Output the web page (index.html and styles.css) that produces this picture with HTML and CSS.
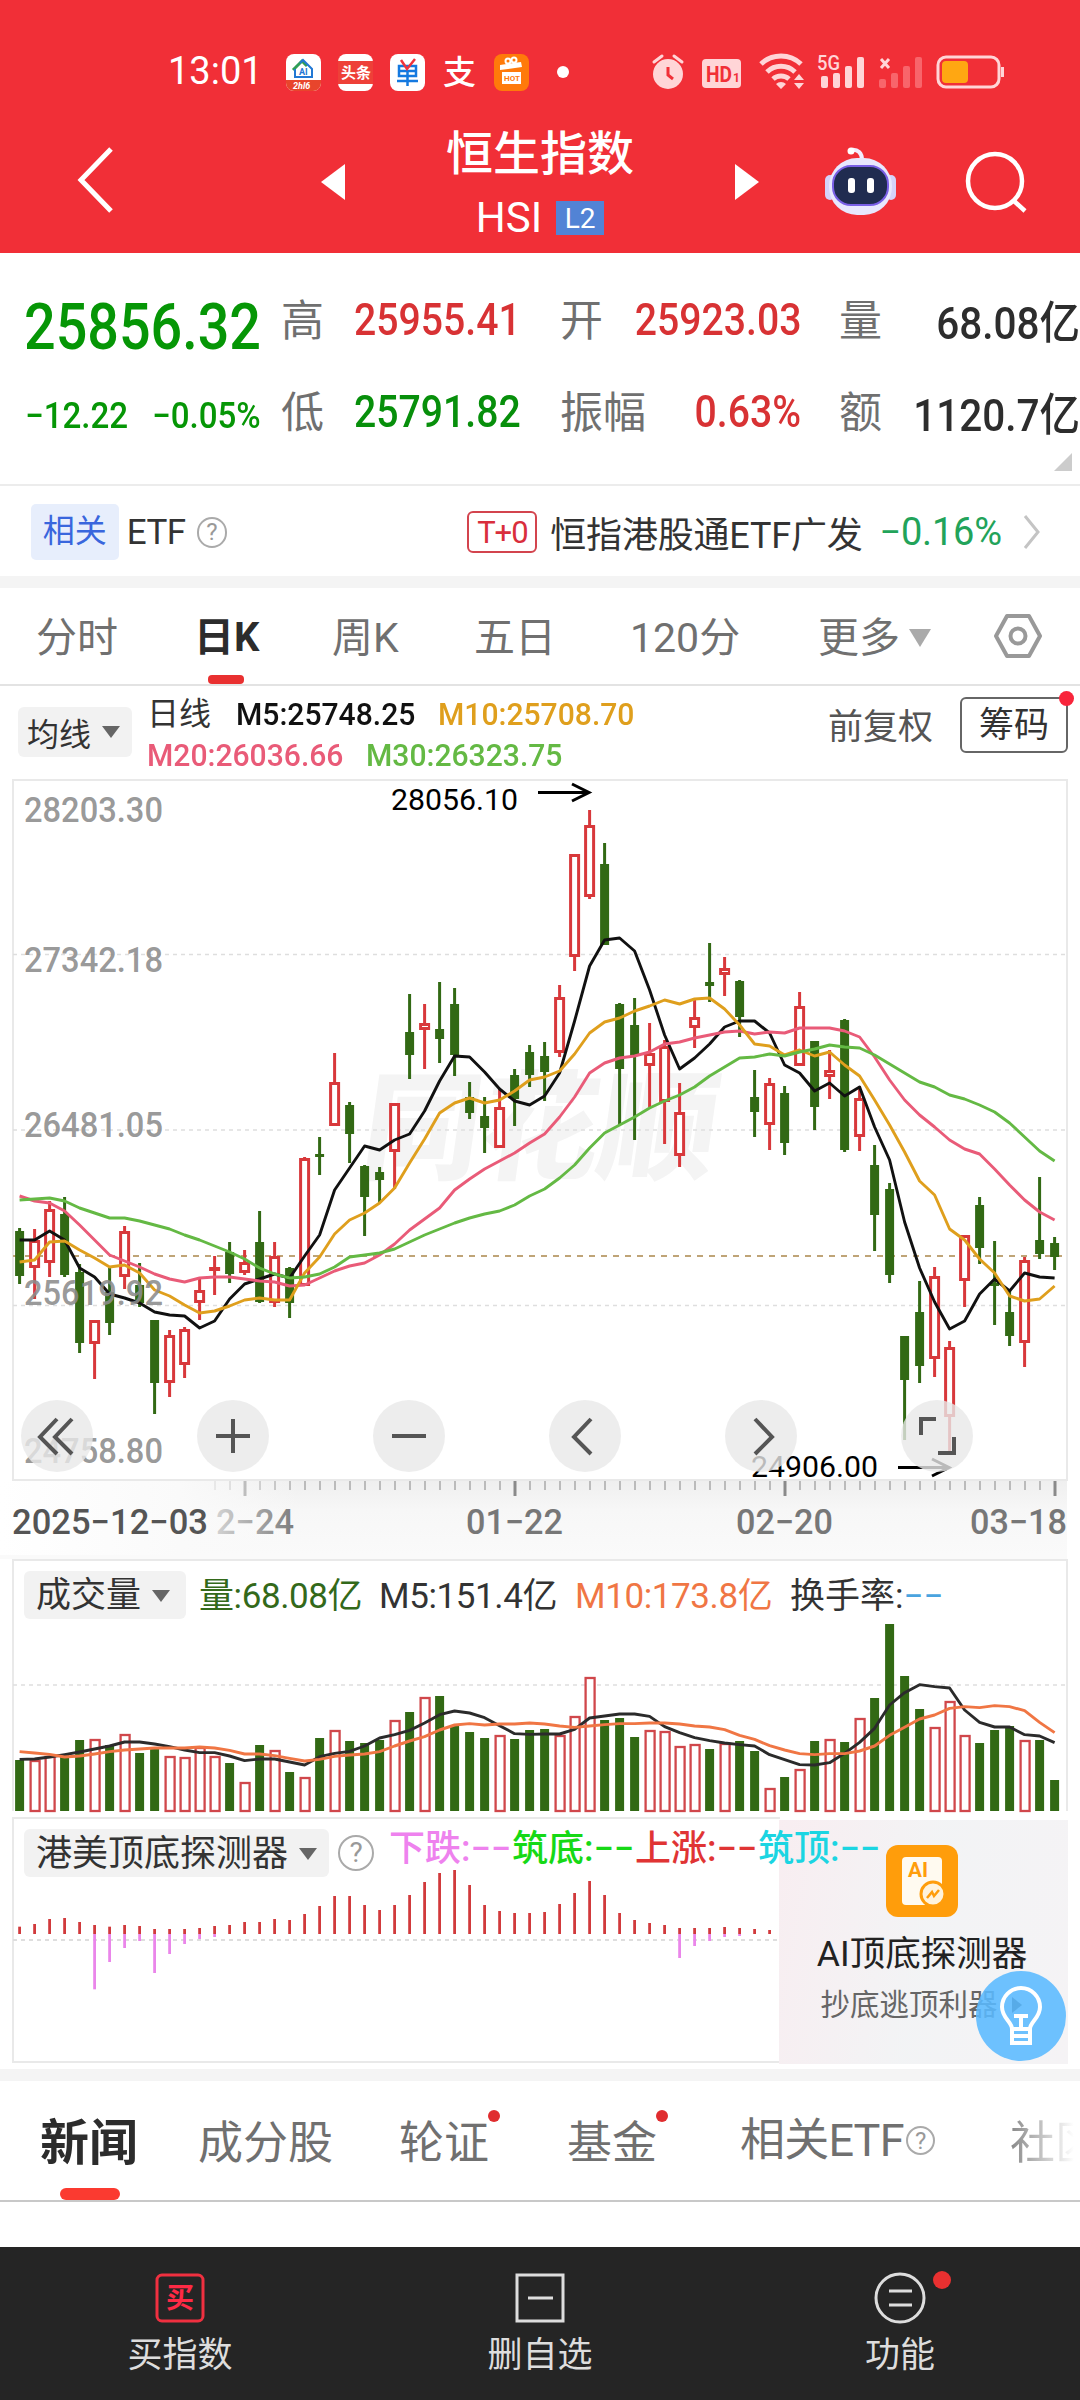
FILE: index.html
```html
<!DOCTYPE html>
<html lang="zh-CN">
<head>
  <meta charset="UTF-8">
  <meta name="viewport" content="width=device-width, initial-scale=1.0">
  <title>恒生指数 HSI</title>
  <link rel="stylesheet" href="styles.css">
</head>
<body>
  <header class="top">
    <div class="status">
      <span class="clock">13:01</span>
      <svg class="status-apps" viewBox="280 48 300 50" width="300" height="50">
        <rect x="286" y="54" width="35" height="37" rx="8" fill="#fff"/>
        <path d="M286 80h35v3a8 8 0 0 1-8 8h-19a8 8 0 0 1-8-8z" fill="#e8452c"/>
        <path d="M293 70l9-9 5 5" fill="none" stroke="#2f9e57" stroke-width="3"/>
        <path d="M300 63l3-3 9 9v8h-17v-8" fill="none" stroke="#2278d4" stroke-width="2"/>
        <text x="299" y="75" font-size="9" font-weight="700" fill="#2278d4">AI</text>
        <text x="293" y="89" font-size="9" font-style="italic" font-weight="700" fill="#fff">2hl6</text>
        <rect x="338" y="54" width="35" height="37" rx="8" fill="#fff"/>
        <rect x="338" y="61" width="35" height="23" fill="#ee4038"/>
        <text x="341" y="78" font-size="15" font-weight="700" fill="#fff">头条</text>
        <rect x="390" y="54" width="35" height="37" rx="8" fill="#fff"/>
        <path d="M399 66h17v10h-17zM399 71h17M407.500 71v15M397 81h21" fill="none" stroke="#1479e0" stroke-width="2.500"/>
        <path d="M401 60l6 9 8-10" fill="none" stroke="#f0333c" stroke-width="2.500"/>
        <text x="443" y="84" font-size="33" font-weight="500" fill="#fff">支</text>
        <rect x="494" y="54" width="35" height="37" rx="8" fill="#ff7a0a"/>
        <path d="M500 65l21-3 1 5-22 3zM502 72h19v12h-19z" fill="#fff"/>
        <circle cx="508" cy="61" r="2.500" fill="none" stroke="#fff" stroke-width="2"/>
        <circle cx="514" cy="60" r="2.500" fill="none" stroke="#fff" stroke-width="2"/>
        <text x="504" y="81" font-size="8" font-weight="700" fill="#ff7a0a">HOT</text>
        <circle cx="563" cy="72" r="6" fill="#fff"/>
      </svg>
      <svg class="status-sys" viewBox="650 48 360 50" width="360" height="50">
        <g fill="#ffd5d7">
          <circle cx="668" cy="74" r="15"/>
          <path d="M654 62l8-6M682 62l-8-6" stroke="#ffd5d7" stroke-width="3" stroke-linecap="round"/>
          <path d="M668 67v8l5 4" fill="none" stroke="#f12f37" stroke-width="3"/>
          <rect x="702" y="59" width="39" height="29" rx="4"/>
          <text x="706" y="82" font-size="22" font-weight="700" fill="#f12f37" textLength="26" lengthAdjust="spacingAndGlyphs">HD</text>
          <text x="733" y="82" font-size="12" font-weight="700" fill="#f12f37">1</text>
        </g>
        <path d="M761 64a29 29 0 0 1 40 0M767 72a20 20 0 0 1 28 0M773 79a12 12 0 0 1 16 0" fill="none" stroke="#ffd5d7" stroke-width="5"/>
        <path d="M776 84l5 5 5-5a7 7 0 0 0-10 0zM794 80l5-6 5 6zM794 83l5 6 5-6z" fill="#ffd5d7"/>
        <g fill="#ffd5d7">
          <text x="817" y="70" font-size="21" font-weight="500" textLength="23" lengthAdjust="spacingAndGlyphs">5G</text>
          <rect x="821" y="76" width="7" height="12" rx="2"/>
          <rect x="833" y="73" width="7" height="15" rx="2"/>
          <rect x="845" y="66" width="7" height="22" rx="2"/>
          <rect x="857" y="57" width="7" height="31" rx="2"/>
        </g>
        <path d="M881 59l8 9M889 59l-8 9" stroke="#ffd5d7" stroke-width="3"/>
        <g fill="#f8656b">
          <rect x="879" y="79" width="7" height="9" rx="2"/>
          <rect x="891" y="73" width="7" height="15" rx="2"/>
          <rect x="903" y="66" width="7" height="22" rx="2"/>
          <rect x="915" y="57" width="7" height="31" rx="2"/>
        </g>
        <rect x="938" y="57" width="61" height="30" rx="8" fill="none" stroke="#ffd5d7" stroke-width="3"/>
        <rect x="942" y="61" width="26" height="22" rx="4" fill="#ffa712"/>
        <rect x="1001" y="67" width="3" height="10" fill="#ffd5d7"/>
      </svg>
    </div>
    <div class="titlebar">
      <svg class="back" viewBox="0 0 40 70" width="40" height="70"><path d="M35 3L5 34l30 31" fill="none" stroke="#fff" stroke-width="5"/></svg>
      <svg class="arrow" viewBox="0 0 24 36" width="24" height="36"><path d="M24 0v36L0 18z" fill="#fff"/></svg>
      <div class="title">
        <div class="name">恒生指数</div>
        <div class="code">HSI<span class="level">L2</span></div>
      </div>
      <svg class="arrow" viewBox="0 0 24 36" width="24" height="36"><path d="M0 0v36l24-18z" fill="#fff"/></svg>
      <svg class="robot" viewBox="0 0 74 72" width="74" height="72">
        <path d="M27 4c7-1 11 3 11 10" fill="none" stroke="#f3edff" stroke-width="4" stroke-linecap="round"/>
        <circle cx="27" cy="5" r="3.500" fill="#fff"/>
        <rect x="1" y="29" width="10" height="25" rx="5" fill="#d5d2fa"/>
        <rect x="62" y="29" width="10" height="25" rx="5" fill="#d5d2fa"/>
        <rect x="5" y="12" width="63" height="57" rx="28" fill="#e8e7fd"/>
        <rect x="9" y="20" width="55" height="39" rx="18" fill="#202c50" stroke="#795fe5" stroke-width="2"/>
        <rect x="24" y="32" width="7" height="15" rx="3" fill="#fff"/>
        <rect x="43" y="32" width="7" height="15" rx="3" fill="#fff"/>
      </svg>
      <svg class="search" viewBox="0 0 62 62" width="62" height="62"><circle cx="30" cy="30" r="27" fill="none" stroke="#fff" stroke-width="4.500"/><path d="M48 49l12 11" stroke="#fff" stroke-width="4.500"/></svg>
    </div>
  </header>

  <section class="quote">
    <div class="price"><span class="num">25856.32</span></div>
    <span class="label">高</span><b class="num left red">25955.41</b>
    <span class="label">开</span><b class="num red">25923.03</b>
    <span class="label">量</span><b class="num dark">68.08亿</b>
    <div class="change"><span class="num">−12.22</span><span class="num">−0.05%</span></div>
    <span class="label">低</span><b class="num left green">25791.82</b>
    <span class="label">振幅</span><b class="num red">0.63%</b>
    <span class="label">额</span><b class="num dark">1120.7亿</b>
    <i class="corner"></i>
  </section>

  <section class="etf">
    <span class="tag">相关</span>
    <span class="etf-name">ETF</span>
    <span class="help">?</span>
    <span class="t0">T+0</span>
    <span class="fund">恒指港股通ETF广发</span>
    <span class="pct">−0.16%</span>
    <svg viewBox="0 0 20 36" width="20" height="36"><path d="M3 2l13 16L3 34" fill="none" stroke="#c4c4c4" stroke-width="3"/></svg>
  </section>

  <nav class="periods">
    <span>分时</span><span class="active">日K</span><span>周K</span><span>五日</span><span>120分</span>
    <span class="more">更多<i class="caret"></i></span>
    <svg viewBox="0 0 50 46" width="50" height="46"><path d="M14 3h22l11 20-11 20H14L3 23z" fill="none" stroke="#999" stroke-width="4" stroke-linejoin="round"/><circle cx="25" cy="23" r="7.500" fill="none" stroke="#999" stroke-width="4"/></svg>
  </nav>

  <section class="legend">
    <span class="pill ma">均线<i class="caret"></i></span>
    <div class="ma-values">
      <span class="day">日线</span><span class="num black">M5:25748.25</span><span class="num m10">M10:25708.70</span>
      <span class="num m20">M20:26036.66</span><span class="num m30">M30:26323.75</span>
    </div>
    <span class="adjust">前复权</span>
    <span class="chips">筹码</span>
  </section>

  <section class="kline">
    <svg id="kline" viewBox="0 775 1080 780" width="1080" height="780">
      <defs>
        <linearGradient id="axisfade" x1="0" x2="0" y1="0" y2="1"><stop offset="0" stop-color="#efefef"/><stop offset=".4" stop-color="#f7f7f7"/><stop offset="1" stop-color="#fafafa"/></linearGradient>
        <linearGradient id="leftfade" x1="0" x2="1" y1="0" y2="0"><stop offset="0" stop-color="#fff"/><stop offset=".6" stop-color="#fafafa"/><stop offset="1" stop-color="#fafafa" stop-opacity="0"/></linearGradient>
      </defs>
    </svg>
    <div class="tools">
      <button><svg viewBox="0 0 72 72"><path d="M36 19L19 37l17 17M51 19L34 37l17 17"/></svg></button>
      <button><svg viewBox="0 0 72 72"><path d="M19 36h34M36 19v34"/></svg></button>
      <button><svg viewBox="0 0 72 72"><path d="M19 36h34"/></svg></button>
      <button><svg viewBox="0 0 72 72"><path d="M42 19L25 37l17 17"/></svg></button>
      <button><svg viewBox="0 0 72 72"><path d="M30 19l17 18-17 17"/></svg></button>
      <button><svg viewBox="0 0 72 72"><path d="M35 19H20v16M53 37v16H37"/></svg></button>
    </div>
  </section>

  <section class="volume">
    <svg id="volume" viewBox="0 1555 1080 260" width="1080" height="260"></svg>
    <div class="volume-head">
      <span class="pill">成交量<i class="caret"></i></span>
      <span class="v0">量:68.08亿</span><span class="v5">M5:151.4亿</span><span class="v10">M10:173.8亿</span><span class="turn">换手率:<em>−−</em></span>
    </div>
  </section>

  <section class="detector">
    <svg id="detector" viewBox="0 1815 780 250" width="780" height="250"></svg>
    <div class="ai-card">
      <svg viewBox="0 0 72 72" width="72" height="72">
        <rect width="72" height="72" rx="12" fill="#ff9d0b"/>
        <rect x="16" y="12" width="40" height="48" rx="4" fill="#fffaf0"/>
        <text x="22" y="32" font-size="20" font-weight="700" fill="#ff9d0b" textLength="20" lengthAdjust="spacingAndGlyphs">AI</text>
        <circle cx="47" cy="49" r="12" fill="#fff3dc" stroke="#ff9d0b" stroke-width="3"/>
        <path d="M41 53l5-6 2 4 5-6" fill="none" stroke="#ff9d0b" stroke-width="2.500"/>
      </svg>
      <div class="ai-title">AI顶底探测器</div>
      <div class="ai-sub">抄底逃顶利器<i></i></div>
    </div>
    <div class="detector-head">
      <span class="pill">港美顶底探测器<i class="caret"></i></span>
      <span class="help">?</span>
      <span class="sig fall">下跌:−−</span><span class="sig base">筑底:−−</span><span class="sig rise">上涨:−−</span><span class="sig peak">筑顶:−−</span>
    </div>
    <svg class="bulb" viewBox="0 0 90 90" width="90" height="90">
      <circle cx="45" cy="45" r="45" fill="#5ab9ff" fill-opacity=".88"/>
      <path d="M36 58c0-7-10-11-10-22a19 19 0 0 1 38 0c0 11-10 15-10 22zM36 58v14h18V58M36 65h18M38 45h14M45 45v13" fill="none" stroke="#fff" stroke-width="4"/>
    </svg>
  </section>

  <nav class="news">
    <span class="active">新闻</span><span>成分股</span><span class="dot">轮证</span><span class="dot">基金</span><span class="rel">相关ETF<span class="help">?</span></span><span class="cut">社区</span>
  </nav>

  <footer class="bottom">
    <div><svg viewBox="0 0 54 54" width="54" height="54"><rect x="4" y="4" width="46" height="46" rx="5" fill="none" stroke="#f03040" stroke-width="3"/><text x="13" y="37" font-size="28" font-weight="700" fill="#ff2a45">买</text></svg>买指数</div>
    <div><svg viewBox="0 0 54 54" width="54" height="54"><path d="M4 4h46v46H4zM15 27h25" fill="none" stroke="#ddd" stroke-width="3"/></svg>删自选</div>
    <div><svg viewBox="0 0 80 54" width="80" height="54"><circle cx="40" cy="27" r="24" fill="none" stroke="#ddd" stroke-width="3"/><path d="M29 20h23M29 34h23" stroke="#ddd" stroke-width="3"/></svg>功能<i class="badge"></i></div>
  </footer>

  <script src="chart.js"></script>
</body>
</html>
```
FILE: styles.css
```css
* {
  box-sizing: border-box;
}

body {
  margin: 0;
  width: 1080px;
  height: 2400px;
  overflow: hidden;
  background: #fff;
  color: #333;
  font-family: Roboto, "Noto Sans CJK SC", sans-serif;
  font-size: 36px;
}

svg {
  display: block;
  flex: none;
}

i,
em {
  font-style: normal;
}

/* Narrow digits used for all quotes */
.num {
  display: block;
  white-space: nowrap;
  transform: scaleX(.87);
  transform-origin: left center;
}

.caret {
  display: inline-block;
  border: 9px solid transparent;
  border-top: 12px solid #666;
  border-bottom: 0;
}

.help {
  display: flex;
  align-items: center;
  justify-content: center;
  width: 31px;
  height: 31px;
  border: 2px solid #aaa;
  border-radius: 50%;
  color: #999;
  font-size: 24px;
  line-height: 1;
}

.pill {
  display: flex;
  align-items: center;
  gap: 11px;
  height: 48px;
  padding: 0 12px;
  border-radius: 6px;
  background: #f2f2f2;
  white-space: nowrap;
}

/* Header */
.top {
  height: 253px;
  background: #f12f37;
  color: #fff;
}

.status {
  display: flex;
  height: 120px;
  padding: 48px 0 0 168px;
}

.clock {
  width: 112px;
  font-size: 38px;
  line-height: 46px;
}

.status-sys {
  margin-left: 70px;
}

.titlebar {
  display: grid;
  grid-template-columns: 245px 24px 390px 24px 65px 141px 62px;
  padding-left: 76px;
  height: 133px;
}

.back {
  margin-top: 26px;
}

.arrow {
  margin-top: 44px;
}

.robot {
  margin-top: 26px;
  grid-column: 6;
}

.search {
  margin-top: 31px;
}

.title {
  text-align: center;
}

.name {
  margin-top: 7px;
  font-size: 47px;
  font-weight: 500;
  line-height: 54px;
}

.code {
  display: flex;
  justify-content: center;
  align-items: center;
  gap: 14px;
  margin-top: 10px;
  font-size: 42px;
  line-height: 54px;
}

.level {
  width: 48px;
  height: 34px;
  background: #5283d5;
  font-size: 28px;
  line-height: 35px;
}

/* Quote */
.quote {
  position: relative;
  display: grid;
  grid-template-columns: 254px 73px 206px 50px 191px 78px 201px;
  grid-template-rows: 92px 92px;
  align-items: center;
  height: 233px;
  padding: 20px 0 0 27px;
  border-bottom: 2px solid #ececec;
}

.quote .label {
  padding-bottom: 4px;
  color: #707070;
  font-size: 43px;
  white-space: nowrap;
}

.quote b {
  font-size: 45px;
  font-weight: 500;
  transform-origin: right center;
  text-align: right;
}

.quote b.left {
  text-align: left;
  transform-origin: left center;
}

/* third pair of each row sits further right */
.quote .label:nth-of-type(3n) {
  padding-left: 38px;
}

.price {
  margin-left: -3px;
  padding-top: 16px;
  color: #069606;
  font-size: 64px;
  font-weight: 500;
}

.change {
  display: grid;
  grid-template-columns: 127px 120px;
  margin-left: -2px;
  padding-top: 10px;
  color: #069606;
  font-size: 36px;
  font-weight: 500;
}

.change .num {
  transform: scaleX(.92);
}

.red {
  color: #d83234;
}

.green {
  color: #078f0b;
}

.dark {
  color: #2d2d2d;
}

.quote .dark {
  transform: scaleX(.9);
}

.corner {
  position: absolute;
  right: 8px;
  bottom: 13px;
  border-left: 18px solid transparent;
  border-bottom: 18px solid #ccc;
}

/* Related fund */
.etf {
  display: flex;
  align-items: center;
  height: 102px;
  padding: 2px 38px 0 31px;
  border-bottom: 12px solid #f4f4f4;
}

.tag {
  width: 88px;
  height: 56px;
  border-radius: 5px;
  background: #e7eefc;
  color: #3966dd;
  font-size: 32px;
  line-height: 54px;
  text-align: center;
}

.etf-name {
  width: 78px;
  padding-left: 8px;
  font-size: 35px;
  letter-spacing: -.5px;
}

.t0 {
  width: 70px;
  height: 42px;
  margin: 0 13px 0 240px;
  border: 2px solid #d3444e;
  border-radius: 6px;
  color: #d92e3c;
  font-size: 31px;
  line-height: 39px;
  letter-spacing: -1px;
  text-align: center;
}

.fund {
  width: 331px;
  font-size: 36px;
  letter-spacing: -.2px;
  white-space: nowrap;
}

.pct {
  width: 143px;
  margin-left: -1px;
  color: #22a35a;
  font-size: 38px;
  letter-spacing: -.2px;
}

/* Period tabs */
.periods {
  display: grid;
  grid-template-columns: 161px 135px 142px 156px 188px 175px 50px;
  align-items: center;
  height: 98px;
  padding-left: 36px;
  border-bottom: 2px solid #e3e3e3;
  color: #707070;
  font-size: 41px;
  line-height: 96px;
  white-space: nowrap;
}

.periods span {
  height: 96px;
  padding-top: 2px;
}

.periods .active {
  position: relative;
  margin-left: -3px;
  color: #2c2c2c;
  font-size: 40px;
  font-weight: 700;
}

.periods .active::after {
  content: "";
  position: absolute;
  left: 14px;
  bottom: 0;
  width: 36px;
  height: 9px;
  border-radius: 4px;
  background: #e93030;
}

.more .caret {
  margin-left: 9px;
  border-width: 18px 11px 0;
  border-top-color: #aaa;
  vertical-align: 5px;
}

/* Moving average legend */
.legend {
  display: flex;
  height: 89px;
  padding-left: 18px;
}

.legend .ma {
  width: 114px;
  height: 50px;
  margin-top: 21px;
  padding: 0 9px;
  font-size: 32px;
}

.ma-values {
  display: grid;
  grid-template-columns: 89px 130px 72px 340px;
  grid-template-rows: 41px 41px;
  width: 682px;
  padding: 8px 0 0 15px;
  font-size: 32px;
  line-height: 41px;
}

.ma-values .num {
  transform: scaleX(.94);
  font-weight: 500;
}

.ma-values .num:nth-child(3) {
  grid-column: 4;
}

.ma-values .m20 {
  grid-column: 1 / span 2;
}

.ma-values .m30 {
  grid-column: 3 / span 2;
}

.day {
  font-size: 32px;
}

.black {
  color: #111;
}

.m10 {
  color: #df9f1d;
}

.m20 {
  color: #e95b78;
}

.m30 {
  color: #64b944;
}

.adjust {
  width: 132px;
  margin-left: 14px;
  margin-top: 15px;
  font-size: 35px;
  line-height: 54px;
  color: #555;
}

.chips {
  position: relative;
  width: 108px;
  height: 56px;
  margin-top: 11px;
  border: 2px solid #666;
  border-radius: 6px;
  font-size: 35px;
  line-height: 53px;
  text-align: center;
}

.chips::after {
  content: "";
  position: absolute;
  top: -8px;
  right: -8px;
  width: 15px;
  height: 15px;
  border-radius: 50%;
  background: #f8253b;
}

/* Charts */
.kline,
.volume,
.detector {
  position: relative;
}

.tools {
  position: absolute;
  left: 21px;
  top: 625px;
  display: flex;
  gap: 104px;
}

.tools button {
  width: 72px;
  height: 72px;
  padding: 0;
  border: 0;
  border-radius: 50%;
  background: rgba(232, 232, 232, .8);
}

.tools path {
  fill: none;
  stroke: #555;
  stroke-width: 4;
}

.volume-head {
  position: absolute;
  left: 24px;
  top: 16px;
  display: grid;
  grid-template-columns: 175px 180px 196px 215px auto;
  font-size: 35px;
  line-height: 52px;
  white-space: nowrap;
}

.volume-head .pill {
  width: 162px;
}

.volume-head .pill,
.detector-head .pill {
  padding-top: 2px;
}

.v0,
.v5,
.v10 {
  letter-spacing: -.4px;
}

.v0 {
  color: #33691a;
}

.v10 {
  color: #f07644;
}

.turn em {
  color: #4aa3df;
}

/* Detector */
.detector {
  display: flex;
  height: 266px;
  border-bottom: 12px solid #f4f4f4;
}

.detector-head {
  position: absolute;
  left: 24px;
  top: 14px;
  display: flex;
  font-size: 36px;
  line-height: 46px;
  white-space: nowrap;
}

.detector-head .pill {
  width: 305px;
}

.detector-head .help {
  width: 36px;
  height: 36px;
  margin: 6px 15px 0 9px;
  font-size: 28px;
}

.sig {
  width: 123px;
  margin-top: -3px;
  font-weight: 500;
}

.fall { color: #ee82ee; }
.base { color: #16d916; }
.rise { color: #e03434; }
.peak { color: #1bd5e2; }

.ai-card {
  display: flex;
  flex-direction: column;
  align-items: center;
  width: 289px;
  height: 244px;
  margin-top: 5px;
  margin-left: -1px;
  padding: 25px 3px 0 0;
  background: linear-gradient(100deg, rgba(250, 234, 238, .6), rgba(240, 244, 245, .5) 50%, rgba(245, 243, 245, 0)), #f5f3f5;
}

.ai-title {
  margin-top: 14px;
  color: #222;
  font-size: 35.5px;
  line-height: 46px;
}

.ai-sub {
  display: flex;
  align-items: center;
  margin-top: 5px;
  margin-left: -2px;
  color: #666;
  font-size: 29.5px;
  line-height: 46px;
}

.ai-sub i {
  margin-left: 14px;
  border: 8px solid transparent;
  border-left: 10px solid #444;
  border-right: 0;
}

.bulb {
  position: absolute;
  left: 976px;
  top: 156px;
}

/* News tabs */
.news {
  display: grid;
  grid-template-columns: 158px 201px 168px 173px 270px 71px;
  height: 121px;
  padding-left: 40px;
  border-bottom: 2px solid #c8c8c8;
  color: #707070;
  font-size: 45px;
  line-height: 125px;
  white-space: nowrap;
  overflow: hidden;
}

.news span {
  position: relative;
  height: 119px;
}

.news .active {
  color: #2c2c2c;
  font-size: 49px;
  font-weight: 700;
}

.news .active::after {
  content: "";
  position: absolute;
  left: 20px;
  bottom: 0;
  width: 60px;
  height: 12px;
  border-radius: 6px;
  background: #fb3a30;
}

.news .dot::after {
  content: "";
  position: absolute;
  left: 89px;
  top: 29px;
  width: 12px;
  height: 12px;
  border-radius: 50%;
  background: #e02d2f;
}

.rel {
  display: flex;
  align-items: center;
  letter-spacing: -.8px;
}

.news .rel .help {
  width: 29px;
  height: 29px;
  margin-left: 2px;
}

.cut {
  background: linear-gradient(90deg, #888, #fff 90%);
  background-clip: text;
  -webkit-background-clip: text;
  color: transparent;
}

/* Bottom bar */
.bottom {
  display: grid;
  grid-template-columns: repeat(3, 1fr);
  height: 153px;
  margin-top: 45px;
  background: #252525;
  color: #ddd;
  font-size: 35px;
  line-height: 62px;
}

.bottom div {
  position: relative;
  display: flex;
  flex-direction: column;
  align-items: center;
  padding-top: 24px;
}

.badge {
  position: absolute;
  left: 213px;
  top: 24px;
  width: 18px;
  height: 18px;
  border-radius: 50%;
  background: #e93030;
}
```
FILE: chart.js
```js
const NS = 'http://www.w3.org/2000/svg';
const RED = '#d8383b';
const GREEN = '#326914';
const px = i => 19.6 + i * 15;

function add(svg, name, attrs, text) {
  const el = document.createElementNS(NS, name);
  for (const key in attrs) el.setAttribute(key, attrs[key]);
  if (text) el.textContent = text;
  svg.appendChild(el);
  return el;
}

function line(svg, x1, y1, x2, y2, stroke, extra) {
  add(svg, 'line', Object.assign({ x1, y1, x2, y2, stroke, 'stroke-width': 2 }, extra));
}

function curve(svg, ys, stroke, map = y => y) {
  const points = ys.map((y, i) => px(i) + ',' + map(y)).join(' ');
  add(svg, 'polyline', { points, fill: 'none', stroke, 'stroke-width': 2.9, 'stroke-linejoin': 'round' });
}

function label(svg, text, x, y, width, size, fill, weight = 400) {
  add(svg, 'text', { x, y, fill, 'font-size': size, 'font-weight': weight, textLength: width, lengthAdjust: 'spacingAndGlyphs' }, text);
}

// color, high, body top, body bottom, low
const candles = [
  ['g',1228,1231,1276,1284],['r',1229,1240,1268,1299],['r',1201,1209,1263,1277],['g',1197,1214,1275,1277],
  ['g',1264,1272,1343,1353],['r',1320,1320,1344,1379],['g',1268,1292,1323,1335],['r',1226,1231,1277,1289],
  ['g',1263,1285,1303,1307],['g',1320,1320,1383,1414],['r',1330,1335,1383,1397],['r',1327,1329,1365,1378],
  ['r',1279,1290,1303,1320],['r',1256,1267,1269,1295],['g',1242,1252,1274,1283],['r',1250,1262,1273,1275],
  ['g',1211,1242,1302,1303],['r',1242,1256,1303,1307],['g',1267,1268,1303,1318],['r',1157,1158,1286,1286],
  ['g',1137,1154,1157,1175],['r',1053,1082,1126,1126],['g',1102,1105,1134,1163],['g',1165,1166,1197,1236],
  ['g',1167,1172,1180,1203],['r',1103,1103,1152,1189],['g',994,1032,1055,1079],['r',1004,1023,1030,1069],
  ['g',982,1029,1039,1063],['g',988,1004,1055,1076],['g',1082,1097,1113,1119],['g',1097,1116,1128,1153],
  ['r',1089,1107,1148,1148],['g',1069,1075,1099,1126],['g',1045,1052,1075,1087],['g',1042,1056,1072,1101],
  ['r',985,997,1053,1057],['r',854,854,957,971],['r',810,825,897,899],['g',843,864,945,945],
  ['g',1003,1004,1069,1125],['g',998,1025,1055,1140],['r',1023,1053,1066,1107],['r',1040,1046,1102,1144],
  ['r',1083,1112,1156,1167],['r',1000,1017,1028,1048],['g',943,982,986,1002],['r',957,968,975,996],
  ['g',980,981,1017,1037],['g',1070,1097,1112,1137],['r',1078,1083,1125,1150],['g',1086,1093,1143,1155],
  ['r',992,1006,1066,1066],['g',1041,1041,1107,1130],['r',1050,1070,1077,1099],['g',1019,1020,1150,1152],
  ['r',1086,1098,1137,1151],['g',1145,1165,1215,1251],['g',1183,1189,1275,1283],['g',1336,1336,1380,1440],
  ['g',1281,1312,1366,1383],['r',1267,1276,1359,1377],['r',1341,1347,1417,1451],['r',1235,1235,1281,1307],
  ['g',1197,1205,1248,1264],['g',1241,1283,1286,1325],['g',1290,1312,1336,1346],['r',1257,1260,1343,1367],
  ['g',1177,1240,1254,1259],['g',1237,1243,1257,1270]
];

const m5 = [1240,1240,1231,1240,1268,1277,1294,1298,1303,1312,1315,1316,1328,1321,1299,1284,1279,1274,1278,1256,1235,1190,1168,1146,1150,1140,1134,1111,1081,1056,1057,1072,1089,1101,1105,1096,1073,1021,966,940,938,951,990,1035,1069,1058,1044,1027,1021,1021,1033,1065,1073,1091,1083,1096,1087,1127,1160,1222,1268,1302,1329,1321,1294,1279,1291,1273,1277,1278];
const m10 = [1262,1260,1242,1241,1250,1258,1267,1265,1273,1290,1296,1305,1313,1311,1306,1300,1298,1300,1300,1273,1257,1234,1220,1213,1203,1188,1163,1139,1113,1103,1098,1103,1100,1091,1080,1077,1071,1054,1033,1022,1018,1011,1006,1000,1004,999,998,1009,1025,1044,1046,1055,1050,1056,1052,1065,1076,1100,1125,1152,1181,1195,1229,1240,1259,1273,1296,1301,1299,1286];
const m20 = [1196,1201,1203,1211,1225,1240,1255,1261,1267,1274,1279,1282,1278,1277,1277,1279,1281,1282,1286,1285,1278,1271,1266,1263,1255,1244,1230,1219,1208,1190,1179,1169,1161,1153,1143,1134,1117,1097,1073,1063,1058,1056,1052,1044,1042,1038,1035,1032,1031,1034,1032,1033,1028,1028,1028,1031,1037,1057,1080,1100,1115,1127,1140,1149,1154,1169,1185,1200,1212,1220];
const m30 = [1200,1199,1198,1201,1208,1213,1218,1218,1221,1225,1229,1235,1240,1246,1252,1259,1268,1274,1278,1277,1274,1267,1257,1255,1253,1249,1242,1235,1229,1223,1218,1214,1211,1205,1196,1189,1178,1165,1148,1133,1125,1117,1108,1101,1095,1087,1076,1067,1058,1057,1054,1056,1052,1049,1045,1047,1048,1055,1064,1073,1082,1087,1095,1099,1105,1112,1123,1137,1151,1161];

function drawKline() {
  const svg = document.getElementById('kline');
  add(svg, 'text', { transform: 'translate(358 1170) skewX(-8)', 'font-size': 118, 'font-weight': 900, fill: '#f4f4f4' }, '同花顺');
  add(svg, 'rect', { x: 13, y: 780, width: 1054, height: 700, fill: 'none', stroke: '#e9e9e9', 'stroke-width': 2 });
  [954.5, 1130, 1305.5].forEach(y => line(svg, 13, y, 1067, y, '#dedede', { 'stroke-width': 1.5, 'stroke-dasharray': '4 4' }));
  line(svg, 13, 1256, 1062, 1256, '#bfa477', { 'stroke-dasharray': '6 6' });

  candles.forEach(([c, high, top, bottom, low], i) => {
    const x = px(i);
    if (c === 'g') {
      line(svg, x, high, x, low, GREEN, { 'stroke-width': 3 });
      add(svg, 'rect', { x: x - 4.5, y: top, width: 9, height: bottom - top, fill: GREEN });
    } else {
      line(svg, x, high, x, top, RED, { 'stroke-width': 3 });
      line(svg, x, bottom, x, low, RED, { 'stroke-width': 3 });
      add(svg, 'rect', { x: x - 4, y: top + 1.5, width: 8, height: Math.max(bottom - top - 3, 1), fill: '#fff', stroke: RED, 'stroke-width': 3 });
    }
  });

  curve(svg, m5, '#111');
  curve(svg, m20, '#e95b78');
  curve(svg, m10, '#df9f1d');
  curve(svg, m30, '#64b944');

  [['28203.30', 822], ['27342.18', 972], ['26481.05', 1137], ['25619.92', 1305], ['24758.80', 1463]].forEach(([t, y]) => {
    label(svg, t, 24, y, 139, 35, 'rgba(140, 140, 140, .9)', 500);
  });
  label(svg, '28056.10', 391, 810, 127, 30, '#000');
  add(svg, 'path', { d: 'M538 792.500h51M572 784l17 8.500-17 8.500', fill: 'none', stroke: '#000', 'stroke-width': 3 });
  label(svg, '24906.00', 751, 1477, 127, 30, '#000');
  add(svg, 'path', { d: 'M898 1467.500h51M932 1459l17 8.500-17 8.500', fill: 'none', stroke: '#000', 'stroke-width': 3 });

  // date axis
  add(svg, 'rect', { x: 0, y: 1481, width: 1067, height: 74, fill: 'url(#axisfade)' });
  for (let i = 13; i < 70; i++) {
    const major = [15, 33, 51, 69].includes(i);
    line(svg, px(i) + .4, 1481, px(i) + .4, major ? 1496 : 1490, major ? '#8a8a8a' : '#bbb', { 'stroke-width': major ? 3 : 2 });
  }
  label(svg, '2−24', 216, 1534, 78, 35, '#777', 500);
  add(svg, 'rect', { x: 0, y: 1481, width: 300, height: 74, fill: 'url(#leftfade)' });
  label(svg, '2025−12−03', 12, 1534, 196, 35, '#555', 500);
  label(svg, '01−22', 466, 1534, 97, 35, '#777', 500);
  label(svg, '02−20', 736, 1534, 97, 35, '#777', 500);
  label(svg, '03−18', 970, 1534, 97, 35, '#777', 500);
}

const volumes = [1760,1760,1756,1755,1740,1739,1745,1734,1753,1749,1756,1757,1747,1756,1763,1782,1745,1750,1772,1777,1738,1730,1741,1743,1740,1720,1712,1697,1696,1726,1732,1738,1735,1739,1730,1729,1735,1716,1677,1720,1718,1737,1730,1731,1746,1744,1749,1743,1741,1751,1788,1777,1769,1741,1739,1742,1718,1698,1624,1676,1709,1727,1701,1735,1743,1730,1726,1740,1740,1780];
const v5 = [628,627,621,614,606,597,588,576,576,582,590,600,608,608,618,632,627,627,636,645,620,610,604,588,564,554,541,519,494,483,489,503,527,551,553,552,552,538,504,498,492,492,499,530,548,563,572,579,584,588,614,629,644,645,638,610,577,535,465,428,404,410,414,480,517,531,531,554,558,578];
const v10 = [605,609,613,621,618,612,605,600,597,594,594,594,591,594,601,612,612,617,625,633,628,619,615,612,605,588,573,560,540,525,521,525,522,522,519,522,528,532,528,524,521,521,519,519,522,528,531,539,556,568,587,600,611,614,611,611,603,588,556,532,507,495,475,470,473,467,470,482,517,548];

function drawVolume() {
  const svg = document.getElementById('volume');
  add(svg, 'rect', { x: 0, y: 1555, width: 1067, height: 4, fill: '#fafafa' });
  add(svg, 'path', { d: 'M13 1811V1560H1067V1811', fill: 'none', stroke: '#e9e9e9', 'stroke-width': 2 });
  line(svg, 13, 1685, 1067, 1685, '#dedede', { 'stroke-width': 1.5, 'stroke-dasharray': '4 4' });
  volumes.forEach((top, i) => {
    if (candles[i][0] === 'g') {
      add(svg, 'rect', { x: px(i) - 4.5, y: top, width: 9, height: 1811 - top, fill: GREEN });
    } else {
      add(svg, 'rect', { x: px(i) - 4, y: top + 1, width: 9, height: 1810 - top, fill: '#fff', stroke: '#d0474b', 'stroke-width': 2.3 });
    }
  });
  const scale = v => 1550 + v / 3;
  curve(svg, v5, '#2b2b2b', scale);
  curve(svg, v10, '#f07644', scale);
}

const up = [350,342,327,324,336,345,350,345,348,357,357,357,354,348,345,336,336,327,330,312,288,258,258,285,300,285,255,216,189,180,225,285,303,309,309,306,282,249,213,255,309,330,339,345,354,354,354,351,354,357,360];
const down = { 5: 538, 6: 456, 7: 414, 8: 393, 9: 489, 10: 432, 11: 402, 12: 387, 13: 381, 44: 444, 45: 408, 46: 393, 47: 381, 48: 378 };

function drawDetector() {
  const svg = document.getElementById('detector');
  add(svg, 'path', { d: 'M780 1818H13V2062H780', fill: 'none', stroke: '#e9e9e9', 'stroke-width': 2 });
  line(svg, 13, 1940, 779, 1940, '#dedede', { 'stroke-dasharray': '4 4' });
  up.forEach((v, i) => {
    const x = px(i);
    line(svg, x, 1810 + v / 3, x, 1934, '#d13a3c', { 'stroke-width': 2.8 });
    if (down[i]) line(svg, x, 1934, x, 1810 + down[i] / 3, '#ea86ea', { 'stroke-width': 2.8 });
  });
}

drawKline();
drawVolume();
drawDetector();
```
